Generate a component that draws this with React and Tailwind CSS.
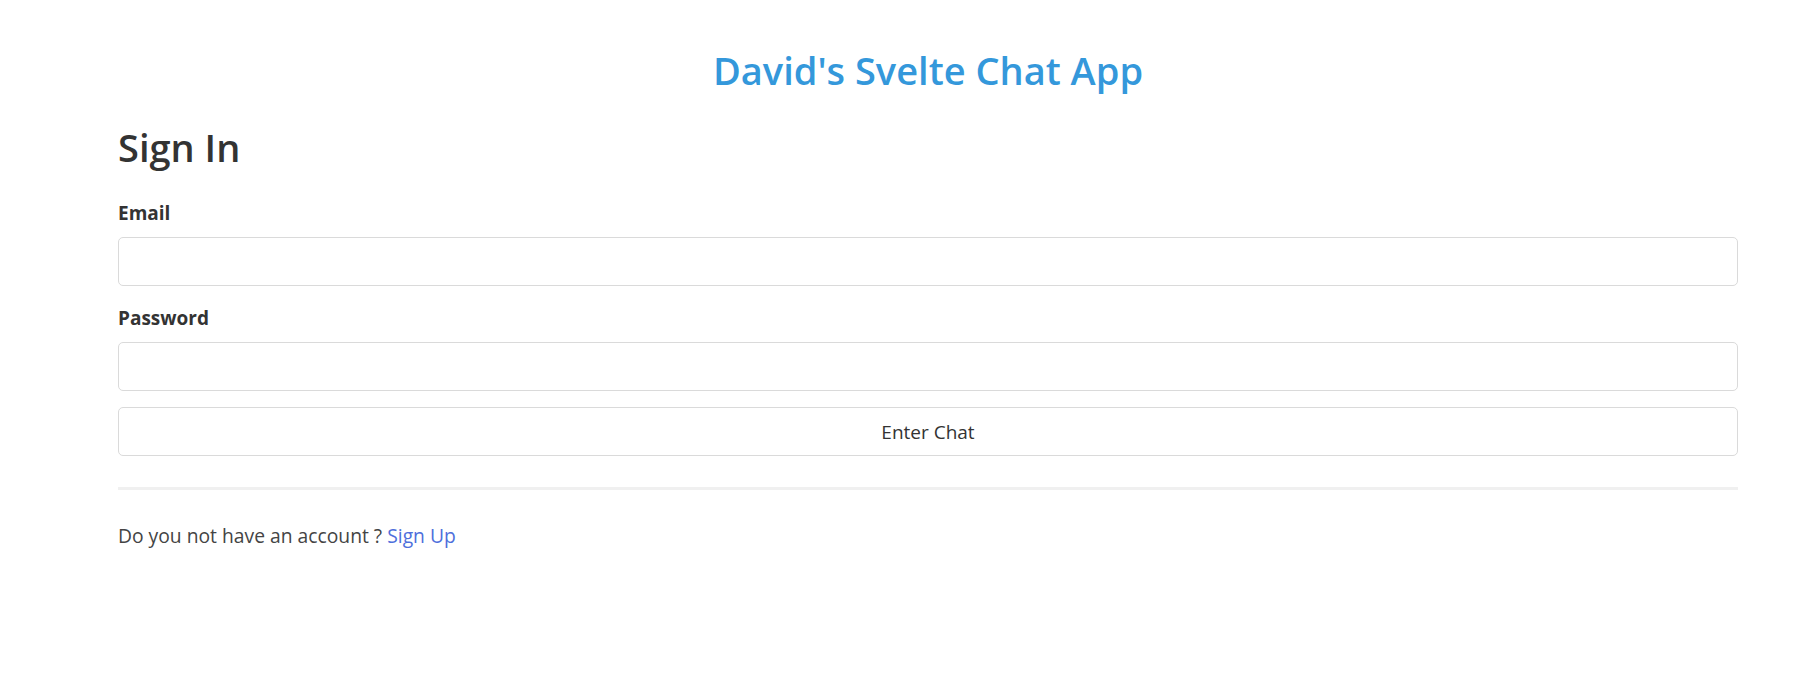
export default function App() {
  return (
    <div className="min-h-screen bg-white font-['Open_Sans',sans-serif] text-[#333]">
      <div className="ml-[118px] w-[1620px]">
        <h1 className="pt-[48px] text-center text-[38px] leading-[44px] font-semibold text-[#3498db]">
          David's Svelte Chat App
        </h1>
        <h2 className="mt-[32px] text-[38px] leading-[46px] font-semibold">
          Sign In
        </h2>
        <form onSubmit={(e) => e.preventDefault()}>
          <label className="mt-[30px] block text-[19px] leading-[26px] font-bold">
            Email
          </label>
          <input
            type="email"
            className="mt-[11px] block h-[49px] w-full rounded-[5px] border border-[#dadada] px-3 text-[19px] outline-none"
          />
          <label className="mt-[19px] block text-[19px] leading-[26px] font-bold">
            Password
          </label>
          <input
            type="password"
            className="mt-[11px] block h-[49px] w-full rounded-[5px] border border-[#dadada] px-3 text-[19px] outline-none"
          />
          <button
            type="submit"
            className="mt-[16px] block h-[49px] w-full rounded-[5px] border border-[#dadada] bg-white pt-[2px] text-[19px] text-[#333]"
          >
            Enter Chat
          </button>
        </form>
        <div className="mt-[31px] h-[3px] bg-[#f0f0f0]" />
        <p className="mt-[33px] text-[19.3px] leading-[26px] text-[#444]">
          Do you not have an account ?{" "}
          <a href="#" className="text-[#4e6fdc]">
            Sign Up
          </a>
        </p>
      </div>
    </div>
  );
}
